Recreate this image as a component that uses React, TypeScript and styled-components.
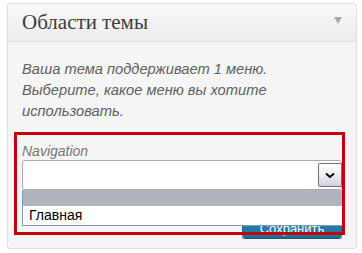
import React from "react";
import styled, { createGlobalStyle } from "styled-components";

const Global = createGlobalStyle`
  html, body { margin: 0; padding: 0; background: #ffffff; }
  body { font-family: "Liberation Sans", Arial, sans-serif; }
`;

const Page = styled.div`
  padding: 3px 0 0 7px;
`;

const Panel = styled.section`
  width: 350px;
  box-sizing: border-box;
  border: 1px solid #dfdfdf;
  border-radius: 3px;
  background: #f5f5f5;
  box-shadow: 0 1px 0 #ffffff inset;
  overflow: hidden;
`;

const Header = styled.header`
  height: 37px;
  display: flex;
  align-items: center;
  justify-content: space-between;
  padding: 0 14px 0 14px;
  background: linear-gradient(to bottom, #f9f9f9, #ececec);
  border-bottom: 1px solid #dfdfdf;
`;

const Title = styled.h3`
  margin: 0;
  font-family: "Liberation Serif", "Times New Roman", serif;
  font-weight: normal;
  font-size: 21px;
  color: #3c3c3c;
`;

const Toggle = styled.span`
  width: 0;
  height: 0;
  border-left: 4px solid transparent;
  border-right: 4px solid transparent;
  border-top: 7px solid #aaaaaa;
  margin-top: -4px;
`;

const Content = styled.div`
  position: relative;
  padding: 17px 15px 10px 14px;
`;

const Description = styled.p`
  margin: 0;
  font-style: italic;
  font-size: 14.7px;
  line-height: 21px;
  color: #606060;
  width: 310px;
`;

const Label = styled.div`
  margin-top: 20px;
  font-style: italic;
  font-size: 14px;
  line-height: 18px;
  color: #777777;
`;

const SelectWrap = styled.div`
  position: relative;
`;

const SelectBox = styled.div`
  height: 30px;
  box-sizing: border-box;
  border: 1px solid #aaaaaa;
  border-radius: 3px;
  background: #ffffff;
  display: flex;
  align-items: center;
  justify-content: flex-end;
  width: 320px;
`;

const ArrowButton = styled.div`
  width: 24px;
  height: 24px;
  box-sizing: border-box;
  border: 1px solid #707070;
  border-radius: 2px;
  background: linear-gradient(to bottom, #ffffff 0%, #f0f0f6 45%, #d2d2e4 100%);
  display: flex;
  align-items: center;
  justify-content: center;
  margin-right: -1px;
`;

const List = styled.ul`
  position: absolute;
  top: 30px;
  left: 0;
  width: 322px;
  margin: 0;
  padding: 0;
  list-style: none;
  box-sizing: border-box;
  border: 1px solid #7f9db9;
  border-top: none;
  background: #ffffff;
  z-index: 2;
`;

const Option = styled.li<{ $active?: boolean }>`
  height: ${(p) => (p.$active ? "16px" : "19px")};
  line-height: 19px;
  padding-left: 6px;
  font-size: 14px;
  color: #000000;
  background: ${(p) => (p.$active ? "#b1b3bf" : "#ffffff")};
`;

const Actions = styled.div`
  display: flex;
  justify-content: flex-end;
  margin-top: 20px;
`;

const SaveButton = styled.button`
  width: 100px;
  height: 28px;
  margin-right: -1px;
  border: 1px solid #1e6a8d;
  border-radius: 3px;
  background: linear-gradient(to bottom, #2a85b0, #21759b);
  box-shadow: 0 1px 0 #1a5c7a;
  color: #ffffff;
  font-family: "Liberation Sans", Arial, sans-serif;
  font-size: 13px;
  padding: 11px 0 0 0;
  line-height: 14px;
  display: flex;
  align-items: flex-start;
  justify-content: center;
  overflow: hidden;
`;

const Highlight = styled.div`
  position: absolute;
  left: 6px;
  top: 90px;
  width: 331px;
  height: 103px;
  box-sizing: border-box;
  border: 3px solid #c4000b;
  z-index: 3;
  pointer-events: none;
`;

export default function App() {
  return (
    <>
      <Global />
      <Page>
        <Panel>
          <Header>
            <Title>Области темы</Title>
            <Toggle />
          </Header>
          <Content>
            <Description>
              Ваша тема поддерживает 1 меню. Выберите, какое меню вы хотите
              использовать.
            </Description>
            <Label>Navigation</Label>
            <SelectWrap>
              <SelectBox>
                <ArrowButton>
                  <svg width="10" height="7" viewBox="0 0 10 7">
                    <path d="M1 1.5 L5 5 L9 1.5" fill="none" stroke="#000" strokeWidth="2" />
                  </svg>
                </ArrowButton>
              </SelectBox>
              <List>
                <Option $active />
                <Option>Главная</Option>
              </List>
            </SelectWrap>
            <Actions>
              <SaveButton>Сохранить</SaveButton>
            </Actions>
            <Highlight />
          </Content>
        </Panel>
      </Page>
    </>
  );
}
